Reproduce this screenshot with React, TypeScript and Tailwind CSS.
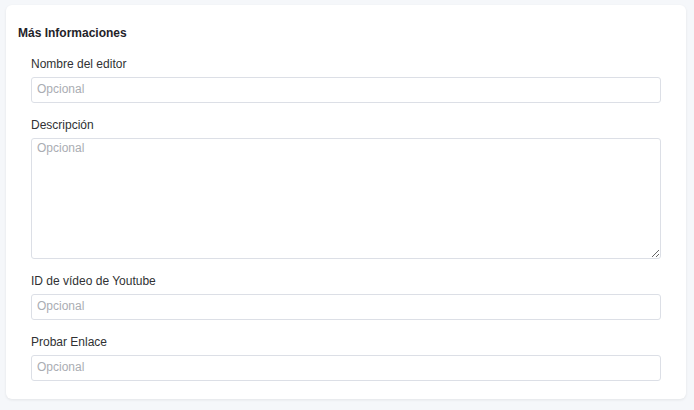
import React from 'react';

const fields = [
  { label: 'Nombre del editor', multiline: false },
  { label: 'Descripción', multiline: true },
  { label: 'ID de vídeo de Youtube', multiline: false },
  { label: 'Probar Enlace', multiline: false },
];

const App: React.FC = () => {
  return (
    <div className="min-h-[410px] bg-[#f5f7fa] pt-[5px] pl-[6px] font-['Liberation_Sans',Arial,sans-serif]">
      <div className="w-[680px] rounded-md bg-white pt-[20px] pb-[18px] shadow-[0_1px_3px_rgba(0,0,0,0.08)]">
        <h2 className="pl-[12px] text-[12px] font-bold leading-[16px] text-[#1f2329]">Más Informaciones</h2>

        <div className="mt-[15px] flex flex-col gap-[14px] px-[25px]">
          {fields.map(field => (
            <div key={field.label}>
              <label className="mb-[5px] block text-[12px] leading-[16px] text-[#303133]">{field.label}</label>
              {field.multiline ? (
                <textarea
                  placeholder="Opcional"
                  className="block h-[121px] w-full rounded-[3px] border border-[#dcdfe6] px-[5px] pt-[1px] text-[12px] leading-[16px] text-[#303133] outline-none placeholder:text-[#aaadb3]"
                />
              ) : (
                <input
                  type="text"
                  placeholder="Opcional"
                  className="block h-[26px] w-full rounded-[3px] border border-[#dcdfe6] px-[5px] pb-[2px] text-[12px] text-[#303133] outline-none placeholder:text-[#aaadb3]"
                />
              )}
            </div>
          ))}
        </div>
      </div>
    </div>
  );
};

export default App;
